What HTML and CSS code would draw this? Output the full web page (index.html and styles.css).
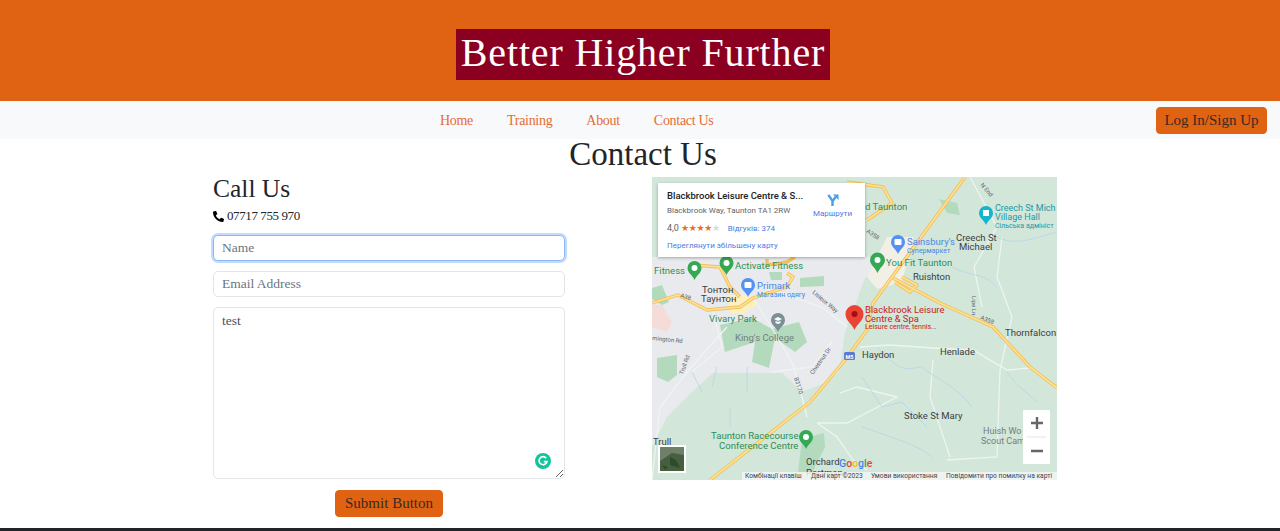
FILE: index.html
```html
<!DOCTYPE html>
<html lang="en">
<head>
    <meta charset="UTF-8">
    <meta name="viewport" content="width=device-width, initial-scale=1.0">
    <title>Contact Us</title>
    <link rel="stylesheet" href="styles.css">
</head>
<body>
    <!-- Banner -->
    <header class="banner">
        <h1 class="banner-title">Better Higher Further</h1>
    </header>

    <!-- Navigation -->
    <nav class="navbar">
        <ul class="nav-links">
            <li><a href="#">Home</a></li>
            <li><a href="#">Training</a></li>
            <li><a href="#">About</a></li>
            <li><a href="#">Contact Us</a></li>
        </ul>
        <button class="btn btn-login" type="button">Log In/Sign Up</button>
    </nav>

    <main>
        <h2 class="page-title">Contact Us</h2>
        <div class="contact-row">
            <form class="contact-form">
                <h3 class="call-title">Call Us</h3>
                <p class="phone">
                    <svg class="phone-icon" viewBox="0 0 512 512"><path transform="matrix(-1 0 0 1 512 0)" d="M493.4 24.6l-104-24c-11.3-2.6-22.9 3.3-27.5 13.9l-48 112c-4.2 9.8-1.4 21.3 6.9 28l60.6 49.6c-36 76.7-98.9 140.5-177.2 177.2l-49.6-60.6c-6.8-8.3-18.2-11.1-28-6.9l-112 48C3.9 366.5-2 378.1.6 389.4l24 104C27.1 504.2 36.7 512 48 512c256.1 0 464-207.5 464-464 0-11.2-7.7-20.9-18.6-23.4z"/></svg>
                    07717 755 970
                </p>
                <input class="field" type="text" placeholder="Name" autofocus>
                <input class="field" type="email" placeholder="Email Address">
                <div class="message-wrap">
                    <textarea class="field message">test</textarea>
                    <svg class="grammarly" viewBox="0 0 16 16">
                        <circle cx="8" cy="8" r="8" fill="#15c39a"/>
                        <path d="M11.2 5.2A4 4 0 1 0 12 8.6H8.8" fill="none" stroke="#fff" stroke-width="1.7"/>
                    </svg>
                </div>
                <div class="form-actions">
                    <button class="btn" type="button">Submit Button</button>
                </div>
            </form>

            <!-- Map -->
            <div class="map">
                <svg class="map-svg" viewBox="0 0 405 303">
                    <rect width="405" height="303" fill="#d2e6da"/>
                    <!-- town -->
                    <path d="M0 80H235L213 101 193 155 187 195 175 205 150 215 140 205 130 196 61 196 40 215 15 240 0 270Z" fill="#e8eaed"/>
                    <path d="M235 60H262L250 105 225 112 215 100Z" fill="#f1efe6"/>
                    <path d="M75 118L100 118 105 128 92 136 78 136Z" fill="#fdf0c0"/>
                    <!-- parks -->
                    <g fill="#b4dabd">
                        <path d="M68 148L100 141 120 152 147 145 155 165 143 175 123 161 117 191 100 185 103 165 73 175Z"/>
                        <path d="M148 101L172 99 172 109 148 110Z"/>
                        <path d="M117 95L130 95 130 103 119 103Z"/>
                        <path d="M0 111L10 108 17 125 10 128 0 122Z"/>
                        <path d="M5 181L25 178 25 198 16 205 5 200Z"/>
                        <path d="M150 262L172 256 173 270 160 296 146 296Z"/>
                        <path d="M287 22L305 26 308 38 295 36Z"/>
                    </g>
                    <path d="M0 128L10 128 20 145 15 155 0 150Z" fill="#f6dcd8"/>
                    <!-- minor roads -->
                    <g fill="none" stroke="#eef5f1" stroke-width="1.300">
                        <path d="M208 170L238 168 281 171 321 173 355 193 378 191"/>
                        <path d="M165 246L195 246 245 220 205 210 188 216"/>
                        <path d="M165 246L185 260 201 283 215 293"/>
                        <path d="M0 303L8 230 31 200 50 178 75 150"/>
                        <path d="M281 183L278 220 298 280"/>
                        <path d="M295 283L345 280 348 193"/>
                        <path d="M155 240C150 220 145 200 140 185 125 160 105 125 100 120"/>
                        <path d="M110 110L170 130 195 150"/>
                        <path d="M330 130L322 90 345 50 318 0"/>
                        <path d="M348 193L360 140 345 100 350 60"/>
                        <path d="M60 130L70 170 40 195"/>
                        <path d="M120 195L160 190 180 165"/>
                    </g>
                    <!-- water -->
                    <g fill="none" stroke="#b5d5e6" stroke-width="0.800">
                        <path d="M225 170C250 200 260 190 270 190 280 200 300 205 320 230"/>
                        <path d="M210 200L230 230 250 225 275 250"/>
                        <path d="M40 195L50 215M65 190L60 210"/>
                        <path d="M95 190V215M78 230V250"/>
                        <path d="M210 250C240 260 270 270 280 280"/>
                        <path d="M355 195C365 210 375 215 385 225"/>
                        <path d="M345 60C365 70 385 60 405 55"/>
                        <path d="M300 90C320 100 330 95 345 110"/>
                    </g>
                    <!-- main roads -->
                    <g fill="none" stroke="#f3bf58" stroke-width="3.400" stroke-linejoin="round">
                        <path d="M313 0L221 126 215 153 193 183 158 225 58 303"/>
                        <path d="M241 101L288 126 341 150 378 190 405 211"/>
                        <path d="M0 126L26 118 55 133 88 130 101 121 135 110 141 100 135 96"/>
                        <path d="M195 5L231 10 240 26 215 43"/>
                        <path d="M243 105L258 115 265 108 250 100"/>
                        <path d="M41 88L68 90 78 110 88 120"/>
                        <path d="M115 82V88L135 85 143 80"/>
                    </g>
                    <g fill="none" stroke="#fde293" stroke-width="1.600" stroke-linejoin="round">
                        <path d="M313 0L221 126 215 153 193 183 158 225 58 303"/>
                        <path d="M241 101L288 126 341 150 378 190 405 211"/>
                        <path d="M0 126L26 118 55 133 88 130 101 121 135 110 141 100 135 96"/>
                        <path d="M195 5L231 10 240 26 215 43"/>
                        <path d="M243 105L258 115 265 108 250 100"/>
                        <path d="M41 88L68 90 78 110 88 120"/>
                    </g>
                    <rect x="192" y="175" width="11" height="8" rx="1.500" fill="#5c7bd0"/>
                    <text class="m-tiny" x="193.500" y="181.500" fill="#fff">M5</text>

                    <!-- grey labels -->
                    <text class="m-label" x="50" y="116">Тонтон</text>
                    <text class="m-label" x="49" y="125">Таунтон</text>
                    <text class="m-label" x="304" y="64">Creech St</text>
                    <text class="m-label" x="307" y="73">Michael</text>
                    <text class="m-label" x="261" y="103">Ruishton</text>
                    <text class="m-label" x="353" y="159">Thornfalcon</text>
                    <text class="m-label" x="210" y="181">Haydon</text>
                    <text class="m-label" x="288" y="178">Henlade</text>
                    <text class="m-label" x="252" y="242">Stoke St Mary</text>
                    <text class="m-label" x="1" y="268">Trull</text>
                    <text class="m-label" x="154" y="288">Orchard</text>
                    <text class="m-label" x="154" y="299">Portman</text>
                    <text class="m-grey" x="331" y="257">Huish Wo</text>
                    <text class="m-grey" x="329" y="267">Scout Camp</text>
                    <text class="m-grey m-college" x="83" y="164">King's College</text>

                    <!-- road names -->
                    <text class="m-road" transform="translate(0 163) rotate(6)">mington Rd</text>
                    <text class="m-road" transform="translate(28 120) rotate(18)">A38</text>
                    <text class="m-road" transform="translate(160 116) rotate(40)">Lisieux Way</text>
                    <text class="m-road" transform="translate(31 198) rotate(-70)">Trull Rd</text>
                    <text class="m-road" transform="translate(161 198) rotate(-55)">Chestnut Dr</text>
                    <text class="m-road" transform="translate(142 201) rotate(72)">B3170</text>
                    <text class="m-road" transform="translate(214 55) rotate(35)">A358</text>
                    <text class="m-road" transform="translate(328 142) rotate(22)">A358</text>
                    <text class="m-road" transform="translate(328 8) rotate(50)">N End</text>
                    <text class="m-road" transform="translate(320 119) rotate(90)">Lipe Ln</text>

                    <!-- green labels -->
                    <text class="m-green" x="2" y="97">Fitness</text>
                    <text class="m-green" x="83" y="92">Activate Fitness</text>
                    <text class="m-green" x="213" y="33">d Taunton</text>
                    <text class="m-green" x="234" y="89">You Fit Taunton</text>
                    <text class="m-green" x="57" y="145">Vivary Park</text>
                    <text class="m-green" x="59" y="262">Taunton Racecourse</text>
                    <text class="m-green" x="67" y="272">Conference Centre</text>

                    <!-- blue labels -->
                    <text class="m-blue" x="105" y="112">Primark</text>
                    <text class="m-blue-sm" x="105" y="120">Магазин одягу</text>
                    <text class="m-blue" x="255" y="68">Sainsbury's</text>
                    <text class="m-blue-sm" x="255" y="76">Супермаркет</text>
                    <text class="m-teal" x="343" y="34">Creech St Mich</text>
                    <text class="m-teal" x="343" y="43">Village Hall</text>
                    <text class="m-teal-sm" x="343" y="51">Сільська адмініст</text>

                    <!-- place label -->
                    <text class="m-red" x="213" y="136">Blackbrook Leisure</text>
                    <text class="m-red" x="213" y="145">Centre &amp; Spa</text>
                    <text class="m-red-sm" x="213" y="152">Leisure centre, tennis...</text>

                    <!-- pins -->
                    <g fill="#34a853">
                        <path d="M35.500 91a7 7 0 0 1 14 0c0 5-5 7-7 12-2-5-7-7-7-12z"/>
                        <path d="M67.500 86a7 7 0 0 1 14 0c0 5-5 7-7 12-2-5-7-7-7-12z"/>
                        <path d="M218 83a7.500 7.500 0 0 1 15 0c0 5-5 7-7.500 13-2.500-6-7.500-8-7.500-13z"/>
                        <path d="M147 260a7 7 0 0 1 14 0c0 5-5 7-7 12-2-5-7-7-7-12z"/>
                    </g>
                    <g fill="#fff">
                        <circle cx="42.500" cy="91" r="3"/>
                        <circle cx="74.500" cy="86" r="3"/>
                        <circle cx="225.500" cy="83" r="3"/>
                        <circle cx="154" cy="260" r="3"/>
                    </g>
                    <path d="M89 108a7 7 0 0 1 14 0c0 5-5 7-7 12-2-5-7-7-7-12z" fill="#5491f5"/>
                    <rect x="92.500" y="105" width="7" height="6" rx="1" fill="#fff"/>
                    <path d="M239 65a7 7 0 0 1 14 0c0 5-5 7-7 12-2-5-7-7-7-12z" fill="#5491f5"/>
                    <rect x="242.500" y="62" width="7" height="6" rx="1" fill="#fff"/>
                    <path d="M327 36a7 7 0 0 1 14 0c0 5-5 7-7 12-2-5-7-7-7-12z" fill="#12b5cb"/>
                    <rect x="331" y="33" width="6" height="6" fill="#fff"/>
                    <path d="M119 143a7 7 0 0 1 14 0c0 5-5 7-7 12-2-5-7-7-7-12z" fill="#7b9095"/>
                    <path d="M122 142l4-2 4 2-4 2zM123.500 144v2l2.500 1 2.500-1v-2l-2.500 1z" fill="#fff"/>
                    <path d="M193.500 137a9 9 0 0 1 18 0c0 7-6 9-9 16-3-7-9-9-9-16z" fill="#ea4335"/>
                    <circle cx="202.500" cy="137" r="3" fill="#a50e0e"/>

                    <!-- layers tile -->
                    <rect x="6" y="268" width="28" height="28" fill="#fff"/>
                    <rect x="8" y="270" width="24" height="24" fill="#46603f"/>
                    <path d="M8 270h24v8L20 276 8 284z" fill="#6f7f69"/>
                    <path d="M18 280l6 3 4 8-10-3zM10 288l6 2 -3 3z" fill="#2f4a2c"/>

                    <!-- google word -->
                    <text class="m-google" x="187" y="290"><tspan fill="#4285f4">G</tspan><tspan fill="#ea4335">o</tspan><tspan fill="#fbbc05">o</tspan><tspan fill="#4285f4">g</tspan><tspan fill="#34a853">l</tspan><tspan fill="#ea4335">e</tspan></text>

                    <!-- attribution -->
                    <rect x="90" y="295" width="315" height="8" fill="#f3f5f4" opacity="0.85"/>
                    <text class="m-attr" x="93" y="301">Комбінації клавіш</text>
                    <text class="m-attr" x="159" y="301">Дані карт ©2023</text>
                    <text class="m-attr" x="219" y="301">Умови використання</text>
                    <text class="m-attr" x="294" y="301">Повідомити про помилку на карті</text>

                    <!-- zoom control -->
                    <rect x="371" y="233" width="27" height="54" rx="1" fill="#fff"/>
                    <rect x="375" y="259.500" width="19" height="1" fill="#e6e6e6"/>
                    <path d="M379 246h12M385 240v12M379 274h12" stroke="#666" stroke-width="2.400" fill="none"/>
                </svg>

                <div class="map-card">
                    <div class="map-card-main">
                        <div class="map-card-name">Blackbrook Leisure Centre &amp; S...</div>
                        <div class="map-card-addr">Blackbrook Way, Taunton TA1 2RW</div>
                        <div class="map-card-rating">
                            <span class="map-card-score">4,0</span>
                            <span class="map-card-stars">★★★★<span class="star-off">★</span></span>
                            <a class="map-card-link map-card-reviews" href="#">Відгуків: 374</a>
                        </div>
                        <a class="map-card-link" href="#">Переглянути збільшену карту</a>
                    </div>
                    <a class="map-card-route" href="#">
                        <svg class="route-icon" viewBox="0 0 14 14">
                            <path d="M7 14V8.500L2.500 2" fill="none" stroke="#4f9ee8" stroke-width="2.600"/>
                            <path d="M7 9L10.500 4" fill="none" stroke="#4f9ee8" stroke-width="2.600"/>
                            <path d="M7.500 1.500H13.500V7.500Z" fill="#4f9ee8"/>
                        </svg>
                        Маршрути
                    </a>
                </div>
            </div>
        </div>
    </main>

    <footer class="site-footer">
        <h4 class="footer-title">OPENING HOURS</h4>
    </footer>
</body>
</html>
```

FILE: styles.css
```css
html, body {
    height: 100%;
}

body {
    font-family: "Liberation Serif", serif;
    margin: 0;
    padding: 0;
    background-color: #fff;
    color: #212529;
    overflow: hidden;
}

/* banner */
.banner {
    background-color: #e06213;
    height: 101px;
    padding-top: 29px;
    padding-left: 456px;
    box-sizing: border-box;
}

.banner-title {
    display: inline-block;
    margin: 0;
    width: 374px;
    height: 51px;
    line-height: 48px;
    text-align: center;
    font-size: 40px;
    font-weight: normal;
    letter-spacing: 0.85px;
    color: #fff;
    background-color: #8b0020;
}

/* nav */
.navbar {
    display: flex;
    align-items: center;
    height: 38px;
    padding-left: 424px;
    padding-right: 13px;
    background-color: #f8f9fa;
}

.nav-links {
    display: flex;
    gap: 2px;
    list-style: none;
    margin: 0;
    padding: 0;
}

.nav-links a {
    display: block;
    padding: 1px 16px 0 16px;
    font-size: 14px;
    letter-spacing: -0.3px;
    color: #e56c37;
    text-decoration: none;
}

.btn {
    font-family: inherit;
    font-size: 15px;
    color: #3a2a20;
    background-color: #e06213;
    border: 1px solid #e06213;
    border-radius: 4px;
    padding: 0;
    height: 27px;
    white-space: nowrap;
    cursor: pointer;
}

.btn-login {
    margin-left: auto;
    width: 111px;
}

/* main content */
.page-title {
    margin: 0 0 5px 0;
    height: 33px;
    line-height: 31px;
    text-align: center;
    padding-left: 6px;
    font-size: 33px;
    font-weight: normal;
}

.contact-row {
    display: grid;
    grid-template-columns: 352px 405px;
    column-gap: 87px;
    padding-left: 213px;
}

.call-title {
    margin: 0;
    font-size: 25.500px;
    font-weight: normal;
    line-height: 24px;
}

.phone {
    display: flex;
    align-items: center;
    gap: 3px;
    margin: 7px 0 11px 0;
    height: 16px;
    font-size: 13px;
    letter-spacing: -0.4px;
}

.phone-icon {
    width: 11px;
    height: 11px;
}

.field {
    display: block;
    width: 100%;
    box-sizing: border-box;
    height: 26px;
    margin-bottom: 10px;
    padding: 0 8px;
    font-family: inherit;
    font-size: 13.500px;
    color: #495057;
    background: #fff;
    border: 1px solid #e3e6e9;
    border-radius: 5px;
    outline: none;
}

.field::placeholder {
    color: #6c757d;
}

.field:focus {
    border-color: #86b7fe;
    box-shadow: 0 0 0 2px #c2dbfe;
}

.message-wrap {
    position: relative;
}

.message {
    height: 172px;
    padding: 5px 8px;
    margin-bottom: 0;
}

.grammarly {
    position: absolute;
    right: 14px;
    bottom: 10px;
    width: 16px;
    height: 16px;
}

.form-actions {
    display: flex;
    justify-content: center;
    margin-top: 11px;
}

.form-actions .btn {
    width: 108px;
    height: 27px;
}

/* map */
.map {
    position: relative;
    width: 405px;
    height: 303px;
}

.map-svg {
    display: block;
    width: 405px;
    height: 303px;
}

.map-svg text {
    font-family: Roboto, sans-serif;
}

.m-label { font-size: 9.500px; fill: #3c4043; }
.m-grey { font-size: 9px; fill: #70807c; }
.m-college { font-size: 9.500px; }
.m-road { font-size: 6px; fill: #5f6368; }
.m-tiny { font-size: 5.500px; font-weight: bold; }
.m-green { font-size: 9.600px; fill: #2f8f55; }
.m-blue { font-size: 9.500px; fill: #4a86e8; }
.m-blue-sm { font-size: 7px; fill: #4a86e8; }
.m-teal { font-size: 9px; fill: #1a9aa8; }
.m-teal-sm { font-size: 7px; fill: #1a9aa8; }
.m-red { font-size: 9.400px; fill: #c5221f; }
.m-red-sm { font-size: 7px; fill: #c5221f; }
.m-google { font-size: 10.500px; font-weight: 500; }
.m-attr { font-size: 6.700px; fill: #444; }

.map-card {
    position: absolute;
    top: 6px;
    left: 6px;
    display: flex;
    justify-content: space-between;
    box-sizing: border-box;
    width: 207px;
    height: 74px;
    padding: 7px 13px 0 9px;
    background: #fff;
    box-shadow: 0 1px 3px rgba(0, 0, 0, 0.3);
    font-family: Roboto, sans-serif;
}

.map-card-name {
    font-size: 9.500px;
    font-weight: 500;
    color: #202124;
    line-height: 12px;
    white-space: nowrap;
}

.map-card-addr {
    margin-top: 3px;
    font-size: 8px;
    line-height: 11px;
    color: #5f6368;
    white-space: nowrap;
}

.map-card-rating {
    display: flex;
    align-items: center;
    margin-top: 6px;
    height: 12px;
    font-size: 9px;
}

.map-card-score {
    color: #5f6368;
    margin-right: 2px;
}

.map-card-stars {
    color: #e7711b;
    font-family: "DejaVu Sans", sans-serif;
    font-size: 9px;
    letter-spacing: -0.3px;
}

.star-off {
    color: #d9d9d9;
}

.map-card-reviews {
    margin-left: 8px;
}

.map-card-link {
    display: block;
    font-size: 8px;
    line-height: 11px;
    color: #4a7de0;
    text-decoration: none;
    white-space: nowrap;
}

.map-card-rating + .map-card-link {
    margin-top: 6px;
}

.map-card-route {
    display: flex;
    flex-direction: column;
    align-items: center;
    gap: 3px;
    margin-top: 3px;
    font-size: 8px;
    color: #4a7de0;
    text-decoration: none;
}

.route-icon {
    width: 13px;
    height: 13px;
}

/* footer */
.site-footer {
    margin-top: 11px;
    height: 3px;
    overflow: hidden;
    padding-left: 875px;
    background-color: #212529;
}

.footer-title {
    margin: 0;
    padding-top: 1px;
    font-size: 16px;
    line-height: 18px;
    font-weight: bold;
    letter-spacing: 0.3px;
    color: #fff;
}
```
